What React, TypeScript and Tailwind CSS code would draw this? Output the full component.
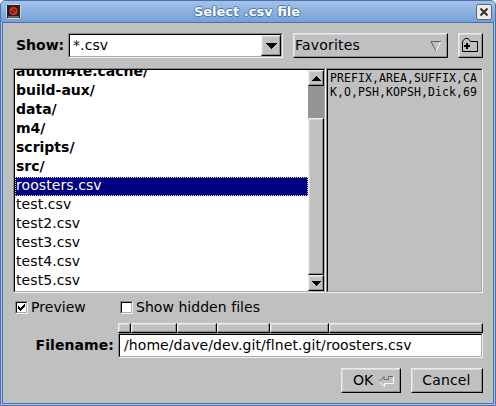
import type { ReactNode } from "react";

const UP =
  "border border-t-[#ececec] border-l-[#ececec] border-b-black border-r-black shadow-[inset_-1px_-1px_0_#8f8f8f,inset_1px_1px_0_#d8d8d8]";
const DOWN =
  "border border-t-[#8c8c8c] border-l-[#8c8c8c] border-b-[#f2f2f2] border-r-[#f2f2f2]";
const DOWN_INNER =
  "border border-t-black border-l-black border-b-[#aaaaaa] border-r-[#aaaaaa]";

function Sunken({ className, inner, children }: { className: string; inner: string; children?: ReactNode }) {
  return (
    <div className={`${DOWN} ${className}`}>
      <div className={`${DOWN_INNER} h-full w-full overflow-hidden ${inner}`}>{children}</div>
    </div>
  );
}

function Arrow({ down, wide }: { down?: boolean; wide?: boolean }) {
  return (
    <svg
      width={wide ? 11 : 9}
      height={wide ? 6 : 5}
      viewBox={wide ? "0 0 11 6" : "0 0 9 5"}
      shapeRendering="crispEdges"
      className={down ? "" : "rotate-180"}
    >
      <path
        d={
          wide
            ? "M0 0H11V1H10V2H9V3H8V4H7V5H6V6H5V5H4V4H3V3H2V2H1V1H0Z"
            : "M0 0H9V1H8V2H7V3H6V4H5V5H4V4H3V3H2V2H1V1H0Z"
        }
      />
    </svg>
  );
}

const entries = [
  "autom4te.cache/", "build-aux/", "data/", "m4/", "scripts/", "src/",
  "roosters.csv", "test.csv", "test2.csv", "test3.csv", "test4.csv", "test5.csv",
];

function Check({ label, checked }: { label: string; checked?: boolean }) {
  return (
    <label className="flex h-[19px] items-center">
      <span className="h-[13px] w-[13px] border border-t-[#8c8c8c] border-l-[#8c8c8c] border-b-[#f2f2f2] border-r-[#f2f2f2]">
        <span className="flex h-[11px] w-[11px] items-center justify-center border border-t-black border-l-black border-b-[#aaaaaa] border-r-[#aaaaaa] bg-white">
          {checked && (
            <svg width="9" height="9" viewBox="0 0 9 9" shapeRendering="crispEdges" className="shrink-0">
              <path d="M1 3h1v1h1v1h1v-1h1v-1h1v-1h1v-1h1v3h-1v1h-1v1h-1v1h-1v1h-1v-1h-1v-1h-1z" />
            </svg>
          )}
        </span>
      </span>
      <span className="pl-[3px] tracking-[0.04px] whitespace-nowrap">{label}</span>
    </label>
  );
}

const segments = ["w-[13px]", "w-[46px]", "w-[40px]", "w-[53px]", "w-[59px]", "w-[154px]"];

export default function App() {
  return (
    <div className="flex h-[406px] w-[496px] flex-col overflow-hidden rounded-t-[5px] border border-[#4a73a9] bg-[#a9c7ed] font-['DejaVu_Sans',sans-serif] text-[14px] leading-[19px] text-black">
      <header className="flex h-[21px] shrink-0 items-center justify-between bg-linear-to-b from-[#a4c2e9] to-[#76a0d6] px-[5px]">
        <svg width="15" height="15" viewBox="0 0 15 15">
          <rect x=".5" y=".5" width="14" height="14" rx="1" fill="#222" stroke="#d8d5cf" />
          <circle cx="7.5" cy="7" r="3.2" fill="#511" stroke="#e32b22" strokeWidth="1.7" />
          <path d="M5 4.8 10 9.3" stroke="#e32b22" strokeWidth="1.5" />
          <path d="M2 13h11" stroke="#aaa" />
        </svg>
        <h1 className="mr-[3px] text-[13px] leading-[20px] font-bold text-white [text-shadow:1px_0_#4a78b5,-1px_0_#4a78b5,0_1px_#4a78b5,0_-1px_#4a78b5]">
          Select .csv file
        </h1>
        <svg width="16" height="16" viewBox="0 0 16 16" className="-mr-[2px]">
          <rect x=".5" y=".5" width="15" height="15" rx="2" fill="#eeece8" stroke="#5f6570" />
          <path d="M4.5 4.5 11.5 11.5M11.5 4.5 4.5 11.5" stroke="#333" strokeWidth="2.1" />
        </svg>
      </header>

      <main className="mx-px mb-px flex flex-1 flex-col border border-[#4a73a9] bg-[#c0c0c0] pr-[10px] pl-[10px]">
        <div className="mt-[10px] flex h-[25px] shrink-0">
          <span className="w-[55px] pt-[3px] pl-[3px] font-bold">Show:</span>
          <Sunken className="w-[215px]" inner="flex bg-white">
            <span className="flex-1 pt-px pl-[3px] tracking-[0.1px]">*.csv</span>
            <span className={`${UP} flex h-[21px] w-[20px] items-center justify-center bg-[#c0c0c0]`}>
              <Arrow down wide />
            </span>
          </Sunken>
          <button className={`${UP} ml-[10px] flex w-[155px] items-center justify-between pr-[5px] pl-px`}>
            <span className="tracking-[0.2px]">Favorites</span>
            <svg width="12" height="12" viewBox="0 0 12 12" fill="none">
              <path d="M11 1 6 11" stroke="#fff" />
              <path d="M11 1.5H1L6 11" stroke="#606060" />
            </svg>
          </button>
          <button className={`${UP} ml-[10px] flex w-[25px] items-center justify-center`}>
            <svg width="17" height="15" viewBox="0 0 17 15" fill="none" stroke="#000">
              <path d="M.5 13.5V3.5L3 .5H6L8.5 3.5H15.5V13.5Z" />
              <path d="M2 8H8M5 5V11" strokeWidth="2" />
            </svg>
          </button>
        </div>

        <div className="mt-[10px] flex h-[225px] shrink-0">
          <Sunken className="w-[313px]" inner="flex bg-white">
            <ul className="-mt-[7px] flex-1">
              {entries.map((name) => (
                <li
                  key={name}
                  className={`h-[19px] pl-px leading-[17px] ${name.endsWith("/") ? "font-bold" : "tracking-[0.08px]"} ${
                    name === "roosters.csv"
                      ? "bg-[#000080] text-white outline-1 -outline-offset-1 outline-dotted outline-[#d8d8a0]"
                      : ""
                  }`}
                >
                  {name}
                </li>
              ))}
            </ul>
            <div className="flex h-[221px] w-[16px] flex-col bg-[#949494]">
              <span className={`${UP} flex h-[16px] shrink-0 items-center justify-center bg-[#c0c0c0]`}>
                <Arrow />
              </span>
              <span className={`${UP} mt-[32px] flex-1 bg-[#c0c0c0]`} />
              <span className={`${UP} flex h-[16px] shrink-0 items-center justify-center bg-[#c0c0c0]`}>
                <Arrow down />
              </span>
            </div>
          </Sunken>
          <Sunken
            className="w-[157px]"
            inner="pt-px pl-[2px] font-['DejaVu_Sans_Mono',monospace] text-[11.5px] leading-[14px] tracking-[0.077px] whitespace-pre"
          >
            {"PREFIX,AREA,SUFFIX,CA\nK,O,PSH,KOPSH,Dick,69"}
          </Sunken>
        </div>

        <div className="mt-[5px] flex shrink-0 pl-[2px]">
          <div className="w-[105px]">
            <Check label="Preview" checked />
          </div>
          <Check label="Show hidden files" />
        </div>

        <div className="mt-[6px] flex h-[35px] shrink-0">
          <span className="w-[105px] pt-[13px] pr-[4px] text-right font-bold tracking-[0.08px]">Filename:</span>
          <div className="w-[365px]">
            <div className="flex h-[10px]">
              {segments.map((w) => (
                <span key={w} className={`${UP} ${w}`} />
              ))}
            </div>
            <Sunken className="h-[25px]" inner="bg-white pt-px pl-[4px] tracking-[0.08px] whitespace-nowrap">
              /home/dave/dev.git/flnet.git/roosters.csv
            </Sunken>
          </div>
        </div>

        <div className="mt-[10px] flex h-[25px] shrink-0 justify-end gap-[10px]">
          <button className={`${UP} flex w-[60px] items-center pl-[11px]`}>
            <span>OK</span>
            <svg width="17" height="12" viewBox="0 0 17 12" fill="none" className="ml-[5px] shrink-0">
              <path d="M15.5 1.5V8.5H6.5V11.5L1 6.5" stroke="#fff" />
              <path d="M1 6.5 6 1.5V4.5H10.5V1.5H15" stroke="#6a6a6a" />
            </svg>
          </button>
          <button className={`${UP} w-[72px] pr-px tracking-[0.15px]`}>Cancel</button>
        </div>
      </main>
    </div>
  );
}
